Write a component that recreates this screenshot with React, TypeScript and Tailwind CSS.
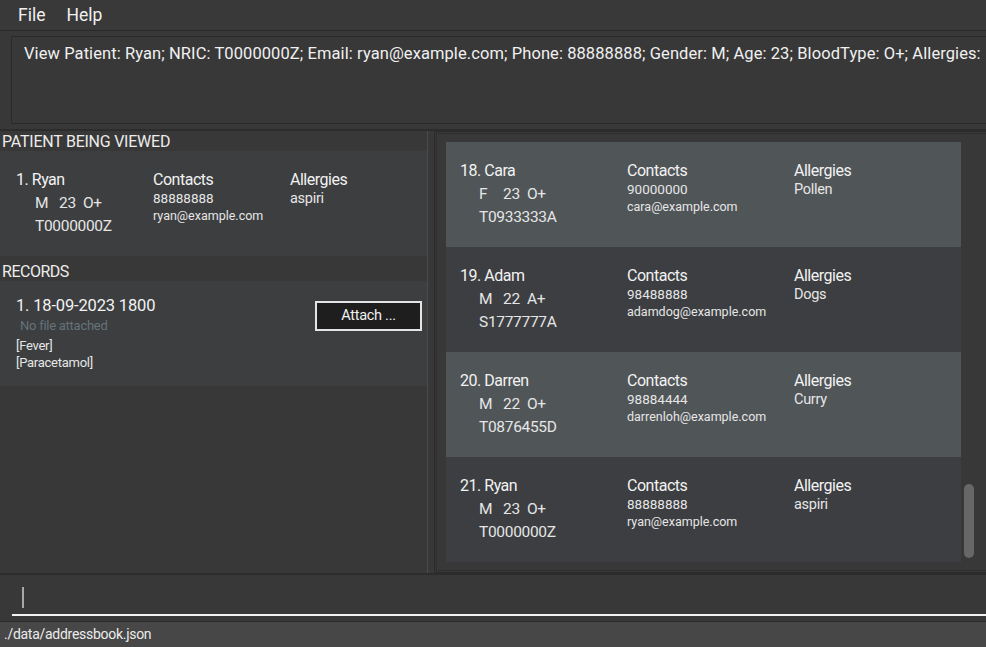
import React from "react";

type Patient = {
  idx: number;
  name: string;
  gender: string;
  age: string;
  blood: string;
  nric: string;
  phone: string;
  email: string;
  allergy: string;
};

const patients: Patient[] = [
  { idx: 18, name: "Cara", gender: "F", age: "23", blood: "O+", nric: "T0933333A", phone: "90000000", email: "cara@example.com", allergy: "Pollen" },
  { idx: 19, name: "Adam", gender: "M", age: "22", blood: "A+", nric: "S1777777A", phone: "98488888", email: "adamdog@example.com", allergy: "Dogs" },
  { idx: 20, name: "Darren", gender: "M", age: "22", blood: "O+", nric: "T0876455D", phone: "98884444", email: "darrenloh@example.com", allergy: "Curry" },
  { idx: 21, name: "Ryan", gender: "M", age: "23", blood: "O+", nric: "T0000000Z", phone: "88888888", email: "ryan@example.com", allergy: "aspiri" },
];

function PatientCard({ p, col, pad, className }: { p: Patient; col: string; pad: string; className: string }) {
  return (
    <div className={`flex h-[105px] shrink-0 pt-[19px] ${pad} ${className}`}>
      <div className={`${col} shrink-0`}>
        <div className="text-[16px] leading-5 tracking-[-0.03em] text-[#f2f2f2]">
          {p.idx}. {p.name}
        </div>
        <div className="mt-[3px] flex pl-[19px] text-[15.5px] leading-5 tracking-[-0.02em] text-[#e6e6e6]">
          <span className="w-[24px]">{p.gender}</span>
          <span className="w-[24px]">{p.age}</span>
          <span>{p.blood}</span>
        </div>
        <div className="mt-[3px] pl-[19px] text-[15.5px] leading-5 tracking-[-0.02em] text-[#e6e6e6]">{p.nric}</div>
      </div>
      <div className={`${col} shrink-0`}>
        <div className="text-[16px] leading-5 tracking-[-0.03em] text-[#f2f2f2]">Contacts</div>
        <div className="text-[13.5px] leading-[17px] text-[#e6e6e6]">{p.phone}</div>
        <div className="text-[12.5px] leading-[17px] text-[#e6e6e6]">{p.email}</div>
      </div>
      <div className="flex-1">
        <div className="text-[16px] leading-5 tracking-[-0.03em] text-[#f2f2f2]">Allergies</div>
        <div className="text-[14.5px] leading-[18px] tracking-[-0.02em] text-[#e6e6e6]">{p.allergy}</div>
      </div>
    </div>
  );
}

export default function App() {
  const viewed: Patient = { ...patients[3], idx: 1 };

  return (
    <div
      className="flex h-[647px] w-[986px] flex-col overflow-hidden bg-[#383838] text-white"
      style={{ fontFamily: "Roboto, 'Noto Sans', sans-serif" }}
    >
      {/* Menu bar */}
      <div className="flex h-[31px] shrink-0 items-center gap-[21px] border-b border-[#2a2a2a] bg-[#393939] pl-[18px] pt-[1px] text-[17.5px] text-[#f0f0f0]">
        <span>File</span>
        <span>Help</span>
      </div>

      {/* Result display */}
      <div className="shrink-0 border-b-2 border-[#2c2c2c] pb-[5px] pl-[11px] pt-[5px]">
        <div className="h-[88px] overflow-hidden whitespace-nowrap border border-r-0 border-[#2a2a2a] bg-[#383838] pl-[12px] pt-[5px] text-[16.5px] leading-6 tracking-[0.005em] text-[#f0f0f0]">
          View Patient: Ryan; NRIC: T0000000Z; Email: ryan@example.com; Phone: 88888888; Gender: M; Age: 23; BloodType: O+; Allergies:
        </div>
      </div>

      {/* Main */}
      <div className="flex h-[444px] shrink-0 border-b-2 border-[#2c2c2c]">
        {/* Left */}
        <div className="flex w-[427px] shrink-0 flex-col">
          <div className="h-[20px] pl-[2px] pt-px text-[16px] leading-5 tracking-[-0.015em] text-[#ececec]">PATIENT BEING VIEWED</div>
          <PatientCard p={viewed} col="w-[137px]" pad="pl-4" className="bg-[#3c3e40]" />
          <div className="h-[25px] pl-[2px] pt-[6px] text-[16px] leading-5 tracking-[-0.03em] text-[#ececec]">RECORDS</div>
          <div className="flex h-[105px] justify-between bg-[#3c3e40] pl-4 pr-[5px] pt-[15px]">
            <div>
              <div className="text-[16.5px] leading-5 tracking-[-0.01em] text-[#f2f2f2]">1. 18-09-2023 1800</div>
              <div className="mt-[1px] pl-1 text-[13px] leading-[18px] tracking-[-0.02em] text-[#65737a]">No file attached</div>
              <div className="mt-[2px] text-[13px] leading-[17px] tracking-[-0.02em] text-[#e6e6e6]">[Fever]</div>
              <div className="text-[13px] leading-[17px] tracking-[-0.02em] text-[#e6e6e6]">[Paracetamol]</div>
            </div>
            <div className="mt-[5px] flex h-[30px] w-[107px] items-center justify-center border-2 border-[#e4e4e4] bg-[#1e1e1e] text-[14.5px] tracking-[-0.02em] text-[#f0f0f0]">
              Attach ...
            </div>
          </div>
        </div>

        {/* Divider */}
        <div className="h-[442px] w-px bg-[#4b4b4b]" />

        {/* Right list */}
        <div className="ml-[6px] flex-1 border border-r-0 border-[#2a2a2a] p-px pr-0">
          <div className="flex h-full border border-r-0 border-[#2e2e2e] bg-[#383838] pb-[8px] pl-[9px] pt-[8px]">
            <div className="flex w-[515px] flex-col">
              {patients.map((p, i) => (
                <PatientCard
                  key={p.idx}
                  p={p}
                  col="w-[167px]"
                  pad="pl-[14px]"
                  className={i % 2 === 0 ? "bg-[#505558]" : "bg-[#3c3e41]"}
                />
              ))}
            </div>
            <div className="flex w-[14px] flex-col pl-[3px] pt-[342px]">
              <div className="h-[74px] w-[10px] rounded-[5px] bg-[#676767]" />
            </div>
          </div>
        </div>
      </div>

      {/* Command box */}
      <div className="h-[46px] shrink-0 pl-[12px]">
        <div className="h-[41px] border-b-2 border-[#f2f2f2] pl-[10px] pt-[12px]">
          <div className="h-[21px] w-[2px] bg-[#a8a8a8]" />
        </div>
      </div>

      {/* Status bar */}
      <div className="flex flex-1 items-center border-t border-[#2a2a2a] bg-[#474747] pl-[4px] text-[14px] tracking-[-0.02em] text-[#ececec]">
        ./data/addressbook.json
      </div>
    </div>
  );
}
